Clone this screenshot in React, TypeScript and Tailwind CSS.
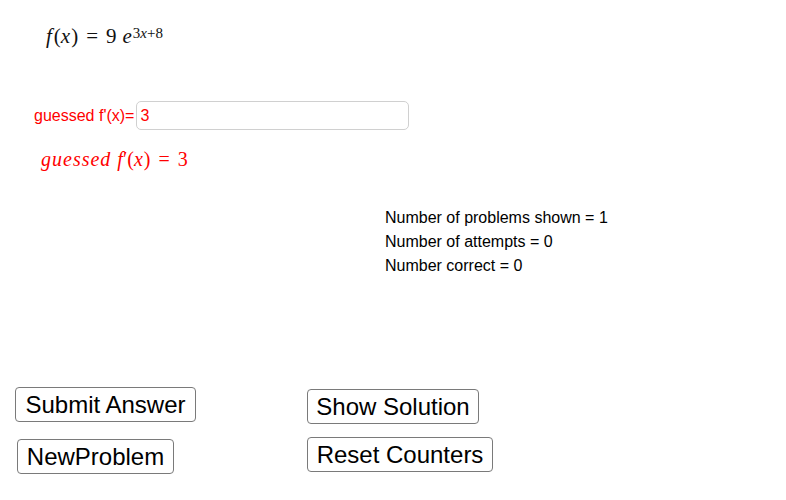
export default function App() {
  const btn =
    'h-[35px] bg-white border border-[#7a7a7a] rounded-[4px] text-[24px] leading-none text-black flex items-center justify-center';

  return (
    <div
      className="w-[786px] h-[500px] bg-white flex flex-col relative overflow-hidden"
      style={{ fontFamily: '"Liberation Sans", Arial, sans-serif' }}
    >
      {/* given function */}
      <div
        className="pl-[46px] pt-[26px] h-[50px] text-[21px] leading-none text-[#111]"
        style={{ fontFamily: '"Liberation Serif", "DejaVu Serif", serif' }}
      >
        <span className="italic">f</span>
        <span className="ml-[2px]">(</span>
        <span className="italic">x</span>
        <span className="ml-[1px]">)</span>
        <span className="mx-[8px]">=</span>
        <span>9</span>
        <span className="ml-[6px] italic">e</span>
        <sup className="text-[15px] relative -top-[5px] ml-[1px]">
          3<span className="italic">x</span>+8
        </sup>
      </div>

      {/* answer input */}
      <div className="mt-[51px] pl-[34px] flex items-center h-[29px]">
        <span className="text-[16px] text-[#ff0000]">guessed f'(x)=</span>
        <div className="ml-[2px] w-[273px] h-[29px] border border-[#d0d0d0] rounded-[5px] flex items-center pl-[3px] text-[16px] text-[#ff0000]">
          3
        </div>
      </div>

      {/* echoed guess */}
      <div
        className="mt-[19px] pl-[41px] text-[20px] leading-none text-[#ff0000] italic"
        style={{ fontFamily: '"Liberation Serif", "DejaVu Serif", serif' }}
      >
        <span className="tracking-[1px]">guessed</span>
        <span className="ml-[6px]">f</span>
        <span className="not-italic">′(</span>x<span className="not-italic ml-[1px]">)</span>
        <span className="not-italic mx-[8px]">=</span>
        <span className="not-italic">3</span>
      </div>

      {/* counters */}
      <div className="mt-[37px] pl-[385px] flex flex-col text-[16px] leading-[24px] text-black">
        <span>Number of problems shown = 1</span>
        <span>Number of attempts = 0</span>
        <span>Number correct = 0</span>
      </div>

      {/* buttons */}
      <div className="mt-[109px] flex">
        <div className="pl-[15px] w-[307px] flex flex-col">
          <button className={`${btn} w-[181px]`}>Submit Answer</button>
          <button className={`${btn} w-[157px] h-[34px] ml-[2px] mt-[17px]`}>NewProblem</button>
        </div>
        <div className="flex flex-col pt-[2px]">
          <button className={`${btn} w-[172px]`}>Show Solution</button>
          <button className={`${btn} w-[186px] h-[34px] mt-[13px]`}>Reset Counters</button>
        </div>
      </div>
    </div>
  );
}
